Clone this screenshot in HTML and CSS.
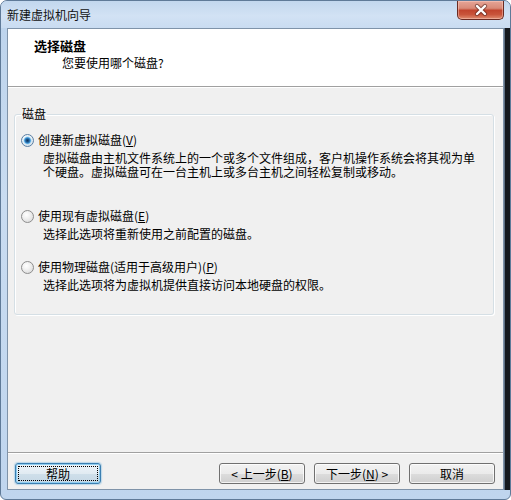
FILE: index.html
```html
<!DOCTYPE html>
<html lang="zh-CN">
<head>
<meta charset="utf-8">
<title>新建虚拟机向导</title>
<link rel="stylesheet" href="styles.css">
</head>
<body>
<div class="window">
  <div class="titlebar">
    <span class="title">新建虚拟机向导</span>
    <button class="close" aria-label="关闭">
      <svg width="45" height="19" viewBox="0 0 45 19">
        <path d="M19 5 L27 13 M27 5 L19 13" stroke="#4a1f18" stroke-width="4.4" stroke-linecap="round" opacity="0.55"/>
        <path d="M19 5 L27 13 M27 5 L19 13" stroke="#ffffff" stroke-width="2.4" stroke-linecap="round"/>
      </svg>
    </button>
  </div>
  <div class="client">
    <div class="header">
      <div class="header-title">选择磁盘</div>
      <div class="header-sub">您要使用哪个磁盘?</div>
    </div>
    <div class="body">
      <fieldset class="group">
        <legend class="group-title">磁盘</legend>
        <div class="option option-first">
          <div class="option-label"><span class="radio checked"></span><span>创建新虚拟磁盘(<u>V</u>)</span></div>
          <p class="option-desc wide">虚拟磁盘由主机文件系统上的一个或多个文件组成，客户机操作系统会将其视为单个硬盘。虚拟磁盘可在一台主机上或多台主机之间轻松复制或移动。</p>
        </div>
        <div class="option option-second">
          <div class="option-label"><span class="radio"></span><span>使用现有虚拟磁盘(<u>E</u>)</span></div>
          <p class="option-desc">选择此选项将重新使用之前配置的磁盘。</p>
        </div>
        <div class="option option-third">
          <div class="option-label"><span class="radio"></span><span>使用物理磁盘(适用于高级用户)(<u>P</u>)</span></div>
          <p class="option-desc">选择此选项将为虚拟机提供直接访问本地硬盘的权限。</p>
        </div>
      </fieldset>
      <div class="footer">
        <button class="btn btn-focus">帮助</button>
        <button class="btn btn-back">&lt; 上一步(<u>B</u>)</button>
        <button class="btn">下一步(<u>N</u>) &gt;</button>
        <button class="btn">取消</button>
      </div>
    </div>
  </div>
</div>
</body>
</html>
```

FILE: styles.css
```css
html, body {
  margin: 0;
  padding: 0;
  background: #ffffff;
}

body {
  font-family: "Noto Sans CJK SC", "Noto Sans", sans-serif;
  font-size: 12px;
  color: #000;
}

.window {
  width: 511px;
  height: 500px;
  box-sizing: border-box;
  border: 1px solid #5f7a98;
  border-radius: 7px 7px 6px 6px;
  overflow: hidden;
  display: flex;
  flex-direction: column;
  background:
    linear-gradient(to right, #5d6f83 0, #5d6f83 1px, #15191e 1px) right 0 top 27px / 6px 462px no-repeat,
    linear-gradient(to bottom, #bcd3ec 0%, #c9dcf1 40%, #bfd5ee 100%);
}

.titlebar {
  height: 27px;
  flex: none;
  display: flex;
  align-items: flex-start;
  padding: 0 6px;
  background: linear-gradient(to bottom, #c2d7ee 0%, #d2e2f4 55%, #c9dcf1 100%);
}

.title {
  margin-top: 6px;
  line-height: 16px;
  font-size: 12px;
  color: #111;
}

.close {
  margin-left: auto;
  width: 47px;
  height: 19px;
  padding: 0;
  border: 1px solid #6a2b22;
  border-top: none;
  border-radius: 0 0 5px 5px;
  background: linear-gradient(to bottom, #e6a597 0%, #d98a78 40%, #c2452e 52%, #c9553b 75%, #e08d70 100%);
  box-shadow: inset 0 0 0 1px rgba(255, 210, 200, 0.45);
  display: flex;
  align-items: center;
  justify-content: center;
}

.close svg {
  display: block;
}

.client {
  flex: 1;
  margin: 0 6px 9px 6px;
  border: 1px solid #7f93a9;
  background: #f0f0f0;
  display: flex;
  flex-direction: column;
  min-height: 0;
}

.header {
  height: 57px;
  flex: none;
  background: #ffffff;
  border-bottom: 1px solid #a0a0a0;
  padding-top: 9px;
  box-sizing: border-box;
  height: 58px;
}

.header-title {
  padding-left: 26px;
  font-size: 13px;
  font-weight: bold;
  line-height: 16px;
}

.header-sub {
  margin-top: 1px;
  padding-left: 54px;
  line-height: 16px;
}

.body {
  flex: 1;
  display: flex;
  flex-direction: column;
  border-top: 1px solid #ffffff;
  padding-top: 19px;
  min-height: 0;
}

.group {
  margin: 0 9px 0 6px;
  padding: 0 0 22px 6px;
  border: 1px solid #d5dfe5;
  border-radius: 3px;
  box-shadow: inset 1px 1px 0 #ffffff, 1px 1px 0 #ffffff;
  min-width: 0;
}

.group-title {
  padding: 0 1px;
  line-height: 14px;
}

.option-first {
  margin-top: 12px;
}

.option-second {
  margin-top: 30px;
}

.option-third {
  margin-top: 19px;
}

.option-label {
  display: flex;
  align-items: center;
  gap: 4px;
  height: 14px;
  line-height: 14px;
}

.radio {
  width: 13px;
  height: 13px;
  box-sizing: border-box;
  border-radius: 50%;
  border: 1px solid #8d8d8d;
  background: radial-gradient(circle at 40% 35%, #ffffff 0%, #f2f2f2 35%, #d4d4d4 100%);
  flex: none;
}

.radio.checked {
  border-color: #5b7fa3;
  background:
    radial-gradient(circle, #0e3560 0, #1d5a92 1.6px, #3f95d6 2.8px, #9ed3f3 3.6px, rgba(200, 230, 250, 0) 4.4px),
    radial-gradient(circle at 40% 35%, #ffffff 0%, #eef4f8 40%, #c9d6e0 100%);
}

.option-desc {
  margin: 4px 0 0 22px;
  line-height: 14px;
}

.option-desc.wide {
  max-width: 438px;
}

.footer {
  margin-top: auto;
  flex: none;
  display: flex;
  gap: 9px;
  padding: 10px 8px 5px 7px;
  border-top: 1px solid #a0a0a0;
  box-shadow: inset 0 1px 0 #ffffff;
}

.btn {
  width: 86px;
  height: 21px;
  padding: 0;
  font-family: "Noto Sans CJK SC", "Noto Sans", sans-serif;
  font-size: 12px;
  line-height: 19px;
  color: #000;
  border: 1px solid #707070;
  border-radius: 3px;
  background: linear-gradient(to bottom, #f2f2f2 0%, #ebebeb 50%, #dddddd 51%, #cfcfcf 100%);
  box-shadow: inset 0 0 0 1px rgba(255, 255, 255, 0.75);
}

.btn-focus {
  border-color: #3c7fb1;
  background: linear-gradient(to bottom, #eef4f9 0%, #e1ebf2 50%, #cfdfea 51%, #c6d8e5 100%);
  box-shadow: inset 0 0 0 1px #8fcdf0, 0 0 1px 1px rgba(90, 170, 220, 0.35);
  outline: 1px dotted #000;
  outline-offset: -4px;
}

.btn-back {
  margin-left: auto;
}
```
